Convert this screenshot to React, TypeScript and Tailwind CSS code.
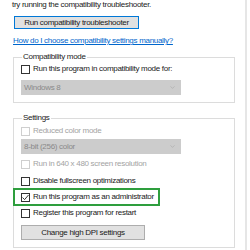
import { ChevronDown } from "lucide-react";

const font = { fontFamily: '"Liberation Sans", Arial, sans-serif' };

function Check({
  label,
  checked,
  disabled,
}: {
  label: string;
  checked?: boolean;
  disabled?: boolean;
}) {
  return (
    <div className="flex items-center h-[10px] gap-[3px] whitespace-nowrap">
      <span
        className={`w-[9px] h-[9px] shrink-0 border bg-white flex items-center justify-center ${
          disabled ? "border-[#cfcfcf]" : "border-[#333333]"
        }`}
      >
        {checked && (
          <svg width="7" height="7" viewBox="0 0 7 7">
            <path d="M0.5 3.5 L2.6 5.6 L6.5 1" fill="none" stroke="#222" strokeWidth="0.9" />
          </svg>
        )}
      </span>
      <span className={disabled ? "text-[#a3a3a3]" : "text-[#1a1a1a]"}>{label}</span>
    </div>
  );
}

function Select({ value }: { value: string }) {
  return (
    <div className="w-[160px] h-[15px] bg-[#cccccc] flex items-center justify-between pl-[3px] pr-[5px] text-[#8a8a8a]">
      <span>{value}</span>
      <ChevronDown size={7} strokeWidth={1.5} color="#9a9a9a" />
    </div>
  );
}

export default function App() {
  return (
    <div
      className="w-[250px] h-[250px] bg-white overflow-hidden flex text-[8px] leading-[10px] tracking-[-0.3px]"
      style={font}
    >
      <div className="w-[245px] flex flex-col pl-[12px]">
        <div className="h-[10px] text-[#1a1a1a] whitespace-nowrap">
          try running the compatibility troubleshooter.
        </div>
        <button className="mt-[6px] ml-[2px] w-[125px] h-[13px] bg-[#e1e1e1] border border-[#0078d7] text-[#1a1a1a] flex items-center justify-center whitespace-nowrap">
          Run compatibility troubleshooter
        </button>
        <div className="mt-[7px] ml-[1px] h-[10px] text-[#0066cc] underline whitespace-nowrap">
          How do I choose compatibility settings manually?
        </div>

        <fieldset className="mt-[6px] ml-[1px] w-[222px] h-[51px] border border-[#dcdcdc] px-[7px]">
          <legend className="text-[#1a1a1a] px-[1px] ml-[1px] leading-[10px]">
            Compatibility mode
          </legend>
          <div className="flex flex-col mt-[2px] gap-[6px]">
            <Check label="Run this program in compatibility mode for:" />
            <Select value="Windows 8" />
          </div>
        </fieldset>

        <fieldset className="mt-[10px] ml-[1px] w-[222px] h-[135px] border border-[#dcdcdc] px-[7px]">
          <legend className="text-[#1a1a1a] px-[1px] ml-[1px] leading-[10px]">
            Settings
          </legend>
          <div className="flex flex-col mt-[3px]">
            <Check label="Reduced color mode" disabled />
            <div className="mt-[3px]">
              <Select value="8-bit (256) color" />
            </div>
            <div className="mt-[5px]">
              <Check label="Run in 640 x 480 screen resolution" disabled />
            </div>
            <div className="mt-[7px]">
              <Check label="Disable fullscreen optimizations" />
            </div>
            <div className="mt-[2px] -ml-[8px] w-[147px] h-[18px] border-[2px] border-[#2e9e3e] flex items-center pl-[6px]">
              <Check label="Run this program as an administrator" checked />
            </div>
            <div className="mt-[2px]">
              <Check label="Register this program for restart" />
            </div>
            <button className="mt-[7px] w-[124px] h-[15px] bg-[#e1e1e1] border border-[#adadad] text-[#1a1a1a] flex items-center justify-center whitespace-nowrap">
              Change high DPI settings
            </button>
          </div>
        </fieldset>
      </div>
      <div className="w-[2px] h-full bg-[#e6e6e6]" />
      <div className="flex-1 bg-white" />
    </div>
  );
}
